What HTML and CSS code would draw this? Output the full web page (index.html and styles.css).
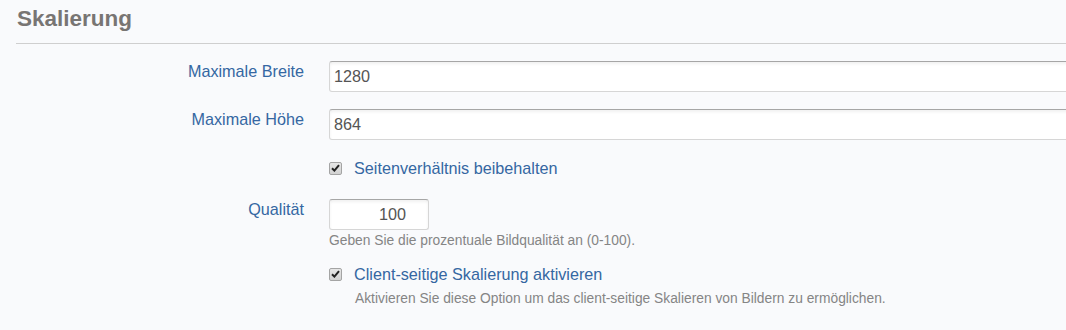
FILE: index.html
```html
<!DOCTYPE html>
<html lang="de">
<head>
    <meta charset="UTF-8">
    <title>Skalierung</title>
    <link rel="stylesheet" href="styles.css">
</head>
<body>
    <div class="panel">
        <h2 class="section-title">Skalierung</h2>

        <form class="settings">
            <div class="row">
                <label class="control-label" for="maxWidth">Maximale Breite</label>
                <div class="control">
                    <input type="text" class="field" id="maxWidth" value="1280">
                </div>
            </div>

            <div class="row">
                <label class="control-label" for="maxHeight">Maximale Höhe</label>
                <div class="control">
                    <input type="text" class="field" id="maxHeight" value="864">
                </div>
            </div>

            <div class="row row-check">
                <div></div>
                <div class="control">
                    <label class="check">
                        <span class="box"><svg width="9" height="8" viewBox="0 0 9 8"><path d="M1 4.2 L3.4 6.6 L8 1.2" fill="none" stroke="#222" stroke-width="2"/></svg></span>
                        Seitenverhältnis beibehalten
                    </label>
                </div>
            </div>

            <div class="row row-quality">
                <label class="control-label" for="quality">Qualität</label>
                <div class="control">
                    <input type="text" class="field field-small" id="quality" value="100">
                    <p class="help">Geben Sie die prozentuale Bildqualität an (0-100).</p>
                </div>
            </div>

            <div class="row row-client">
                <div></div>
                <div class="control">
                    <label class="check">
                        <span class="box"><svg width="9" height="8" viewBox="0 0 9 8"><path d="M1 4.2 L3.4 6.6 L8 1.2" fill="none" stroke="#222" stroke-width="2"/></svg></span>
                        Client-seitige Skalierung aktivieren
                    </label>
                    <p class="help help-indent">Aktivieren Sie diese Option um das client-seitige Skalieren von Bildern zu ermöglichen.</p>
                </div>
            </div>
        </form>
    </div>
</body>
</html>
```

FILE: styles.css
```css
html, body { margin: 0; padding: 0; }
body { font-family: "Liberation Sans", Arial, sans-serif; background-color: #f9fafc; color: #333; overflow: hidden; }
.panel { padding-left: 16px; margin-right: -30px; }
.section-title { margin: 0; padding: 6px 0 11px 1px; font-size: 22.5px; line-height: 26px; font-weight: bold; color: #787573; border-bottom: 1px solid #cfcfcf; }
.settings { margin-top: 17px; }
.row { display: grid; grid-template-columns: 288px 1fr; column-gap: 25px; margin-bottom: 17px; }
.control-label { padding-top: 1px; text-align: right; font-size: 16.2px; line-height: 18px; color: #3567a2; }
.field { display: block; box-sizing: border-box; width: 100%; height: 31px; padding: 0 4px; font-family: inherit; font-size: 16.2px; color: #555; background: #fff; border: 1px solid #d6d6d6; border-top-color: #a6a6a6; border-radius: 3px; box-shadow: inset 0 2px 3px rgba(0, 0, 0, 0.06); outline: none; }
.field-small { width: 100px; text-align: right; padding-right: 22px; }
.row-check { margin-top: 18px; margin-bottom: 0; }
.row-quality { margin-top: 21px; margin-bottom: 0; }
.row-client { margin-top: 14px; }
.check { display: flex; align-items: center; gap: 12px; font-size: 16.2px; line-height: 20px; color: #3567a2; }
.box { display: flex; align-items: center; justify-content: center; box-sizing: border-box; width: 13px; height: 13px; border: 1px solid #a4a4a4; border-radius: 2px; background: linear-gradient(#e6e6e6, #d2d2d2); }
.help { margin: 2px 0 0; font-size: 13.8px; line-height: 18px; color: #858585; }
.help-indent { margin-top: 6px; padding-left: 26px; }
```
